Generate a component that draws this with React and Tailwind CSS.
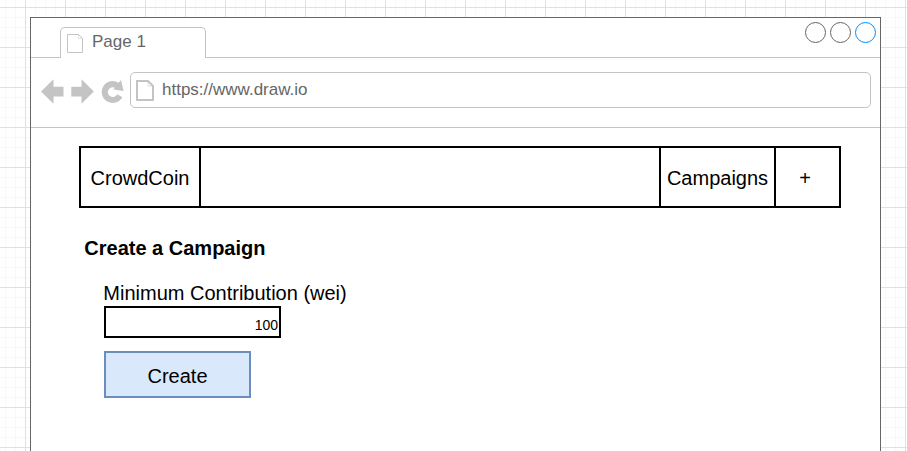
import React from "react";

const BackIcon = () => (
  <svg width="24" height="26" viewBox="0 0 24 26" fill="#c4c4c4">
    <path d="M0 12.5 L12.5 0.3 V7.8 H22.5 V17.5 H12.5 V24.7 Z" />
  </svg>
);

const ForwardIcon = () => (
  <svg width="24" height="26" viewBox="0 0 24 26" fill="#c4c4c4">
    <path d="M22.8 12.5 L10.5 0.3 V7.8 H0.3 V17.5 H10.5 V24.7 Z" />
  </svg>
);

const ReloadIcon = () => (
  <svg width="24" height="26" viewBox="0 0 24 26" fill="#c4c4c4">
    <path d="M17.6 3.7 L20 1 L22.6 12 L12.4 10.4 L14 8.8 A4.9 4.9 0 1 0 16.2 15.2 L21.4 18.3 A11 11 0 1 1 17.6 3.7 Z" />
  </svg>
);

const PageIcon = ({ width, height, stroke, inset, fold }) => {
  const r = width - inset;
  const b = height - inset;
  return (
    <svg width={width} height={height} fill="none" stroke="#c4c4c4" strokeWidth={stroke}>
      <path d={`M${inset} ${inset} H${r - fold} L${r} ${inset + fold} V${b} H${inset} Z`} />
      <path strokeWidth="1" opacity="0.5" d={`M${r - fold} ${inset} V${inset + fold} H${r}`} />
    </svg>
  );
};

const Grid = () => (
  <svg className="absolute inset-0" width="907" height="451" shapeRendering="crispEdges">
    <defs>
      <pattern id="minor" x="5" y="7" width="10" height="10" patternUnits="userSpaceOnUse">
        <path d="M0 0 H10 M0 0.5 H10 M0.5 0 V10" stroke="#f8f8f8" fill="none" />
      </pattern>
      <pattern id="major" x="25" y="7" width="40" height="40" patternUnits="userSpaceOnUse">
        <path d="M0 0.5 H40 M0.5 0 V40" stroke="#e0e0e0" fill="none" />
      </pattern>
    </defs>
    <rect width="907" height="451" fill="url(#minor)" />
    <rect width="907" height="451" fill="url(#major)" />
  </svg>
);

function TabBar() {
  return (
    <div className="flex h-10 items-end">
      <div className="h-px w-[29px] bg-[#c4c4c4]" />
      <div className="flex h-[31px] w-[146px] rounded-t-[5px] border border-b-0 border-[#c4c4c4] pl-[6px]">
        <div className="pt-[6px]">
          <PageIcon width={16} height={19} stroke={1} inset={0.5} fold={4} />
        </div>
        <span className="ml-[9px] pt-1 text-[17px] leading-[19px]">Page 1</span>
      </div>
      <div className="flex h-10 flex-1 justify-end gap-1 border-b border-[#c4c4c4] pt-1 pr-1">
        <div className="size-[21px] rounded-full border border-[#666666]" />
        <div className="size-[21px] rounded-full border border-[#666666]" />
        <div className="size-[21px] rounded-full border border-[#008cff]" />
      </div>
    </div>
  );
}

function AddressBar() {
  return (
    <div className="flex h-[70px] border-b border-[#c4c4c4] pl-[10px] pt-[14px]">
      <div className="flex gap-[6px] pt-[7px]">
        <BackIcon />
        <ForwardIcon />
        <ReloadIcon />
      </div>
      <div className="ml-[5px] flex h-9 w-[741px] rounded-[5px] border border-[#c4c4c4] pl-[5px] pt-[7px]">
        <PageIcon width={18} height={21} stroke={2} inset={1} fold={5} />
        <span className="ml-2 text-[17px] leading-[19px]">https://www.draw.io</span>
      </div>
    </div>
  );
}

export default function App() {
  return (
    <div className="relative h-[451px] w-[907px] overflow-hidden bg-white font-['Liberation_Sans',Arial,sans-serif]">
      <Grid />
      <div className="relative mt-[17px] ml-[30px] h-[460px] w-[851px] border border-[#666666] bg-white text-[#666666]">
        <TabBar />
        <AddressBar />
        <main className="pl-12 pt-[18px] text-xl text-black">
          <nav className="flex h-[62px] w-[762px] border-2 border-black leading-[60px]">
            <div className="w-[120px] border-r-2 border-black text-center">CrowdCoin</div>
            <div className="flex-1" />
            <div className="w-[117px] border-x-2 border-black text-center">Campaigns</div>
            <div className="w-[63px] pr-[5px] text-center">+</div>
          </nav>
          <h1 className="mt-7 ml-[5.3px] font-bold leading-6">Create a Campaign</h1>
          <div className="ml-[25px] mt-[21px]">
            <label className="-ml-[0.7px] block leading-6">Minimum Contribution (wei)</label>
            <div className="mt-px h-8 w-[177px] border-2 border-black pt-[9px] pr-px text-right text-sm leading-4">100</div>
            <button className="mt-[13px] block h-[47px] w-[147px] border-2 border-[#6c8ebf] bg-[#dae8fc] pt-[2px]">Create</button>
          </div>
        </main>
      </div>
    </div>
  );
}
